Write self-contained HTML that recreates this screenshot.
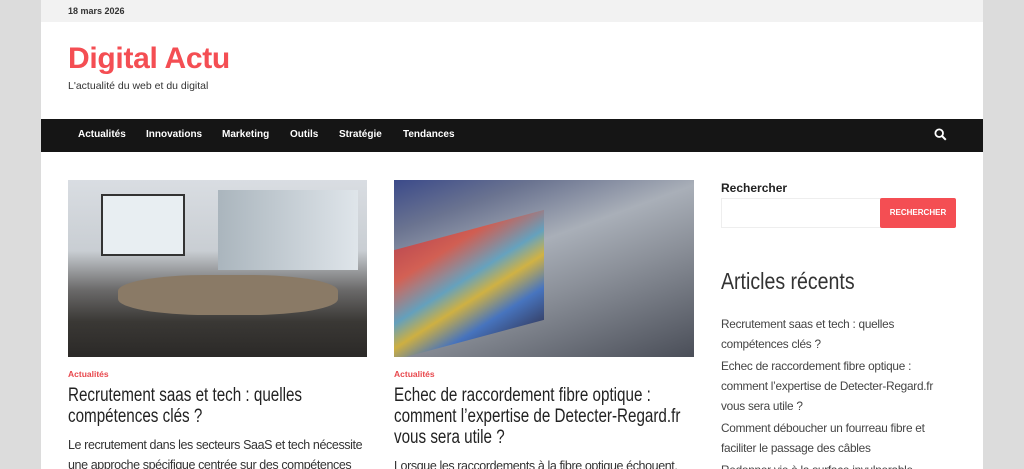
<!DOCTYPE html>
<html><head><meta charset="utf-8"><style>
*{margin:0;padding:0;box-sizing:border-box}
body{width:1024px;height:469px;overflow:hidden;background:#dcdcdc;font-family:"Liberation Sans",sans-serif}
#wrap{position:absolute;left:41px;top:0;width:942px;height:469px;background:#fff;overflow:hidden}
.top{height:22px;background:#f2f2f2;font-size:9px;font-weight:bold;color:#333;padding:6px 0 0 27px}
.logo{position:absolute;left:27px;top:42px;font-size:30px;font-weight:bold;color:#f44e53;letter-spacing:-0.3px}
.tag{position:absolute;left:27px;top:80px;font-size:10.5px;color:#333}
nav{position:absolute;left:0;top:119px;width:942px;height:33px;background:#151515}
nav span{position:absolute;top:10px;color:#fff;font-size:10px;font-weight:bold}
.img{position:absolute;top:180px;height:177px;overflow:hidden}
.cat{position:absolute;top:369px;font-size:8.5px;font-weight:bold;color:#e8484d}
.t{position:absolute;font-size:19px;line-height:21px;color:#222;transform:scaleX(.8);transform-origin:0 0;white-space:nowrap}
.p{position:absolute;font-size:12.5px;line-height:20px;color:#333;letter-spacing:-0.4px;white-space:nowrap}
.side{position:absolute;left:680px}
.rl{font-size:11.8px;line-height:20px;color:#444;letter-spacing:-0.25px;white-space:nowrap}
</style></head><body><div id="wrap">
<div class="top">18 mars 2026</div>
<div class="logo">Digital Actu</div>
<div class="tag">L'actualité du web et du digital</div>
<nav><span style="left:37px">Actualités</span><span style="left:105px">Innovations</span><span style="left:181px">Marketing</span><span style="left:249px">Outils</span><span style="left:298px">Stratégie</span><span style="left:362px">Tendances</span>
<svg style="position:absolute;left:893px;top:9px" width="13" height="13" viewBox="0 0 13 13"><circle cx="5.2" cy="5.2" r="3.8" fill="none" stroke="#fff" stroke-width="1.8"/><path d="M8 8l3.8 3.8" stroke="#fff" stroke-width="2"/></svg></nav>

<div class="img" style="left:27px;width:299px;background:linear-gradient(180deg,#d9dde2 0%,#c9ced3 40%,#6b6a6a 62%,#3a3835 80%,#2b2927 100%)">
<div style="position:absolute;left:33px;top:14px;width:84px;height:62px;background:#e8eef2;border:2px solid #333"></div>
<div style="position:absolute;left:150px;top:10px;width:140px;height:80px;background:linear-gradient(90deg,#aab5bd,#dfe5ea)"></div>
<div style="position:absolute;left:50px;top:95px;width:220px;height:40px;background:#8a7a66;border-radius:40%"></div>
</div>
<div class="img" style="left:353px;width:300px;background:linear-gradient(160deg,#3b4a8a 0%,#6a7390 18%,#a9afb8 40%,#8b9099 60%,#4a4e58 100%)">
<div style="position:absolute;left:0;top:50px;width:150px;height:110px;background:linear-gradient(160deg,#c44 0%,#d54 20%,#5aa0c0 45%,#d9b431 60%,#3b6fc5 80%,#2b3a6a 100%);opacity:.85;transform:skewY(-15deg)"></div>
</div>
<div class="cat" style="left:27px">Actualités</div>
<div class="cat" style="left:353px">Actualités</div>
<div class="t" style="left:27px;top:385px">Recrutement saas et tech : quelles<br>compétences clés ?</div>
<div class="t" style="left:353px;top:385px">Echec de raccordement fibre optique :<br>comment l’expertise de Detecter-Regard.fr<br>vous sera utile ?</div>
<div class="p" style="left:27px;top:435px">Le recrutement dans les secteurs SaaS et tech nécessite<br>une approche spécifique centrée sur des compétences</div>
<div class="p" style="left:353px;top:456px">Lorsque les raccordements à la fibre optique échouent,</div>

<div class="side" style="top:181px;font-size:12px;font-weight:bold;color:#222">Rechercher</div>
<div class="side" style="top:198px;width:160px;height:30px;border:1px solid #eee"></div>
<div style="position:absolute;left:839px;top:198px;width:76px;height:30px;background:#f44e53;border-radius:2px;color:#fff;font-size:8px;font-weight:bold;text-align:center;line-height:30px">RECHERCHER</div>
<div class="side" style="top:268px;font-size:23px;color:#333;transform:scaleX(.85);transform-origin:0 0">Articles récents</div>
<div class="side rl" style="top:314px">Recrutement saas et tech : quelles<br>compétences clés ?</div>
<div class="side rl" style="top:356px">Echec de raccordement fibre optique :<br>comment l’expertise de Detecter-Regard.fr<br>vous sera utile ?</div>
<div class="side rl" style="top:418px">Comment déboucher un fourreau fibre et<br>faciliter le passage des câbles</div>
<div class="side rl" style="top:460px">Redonner vie à la surface invulnerable...</div>
</div></body></html>
